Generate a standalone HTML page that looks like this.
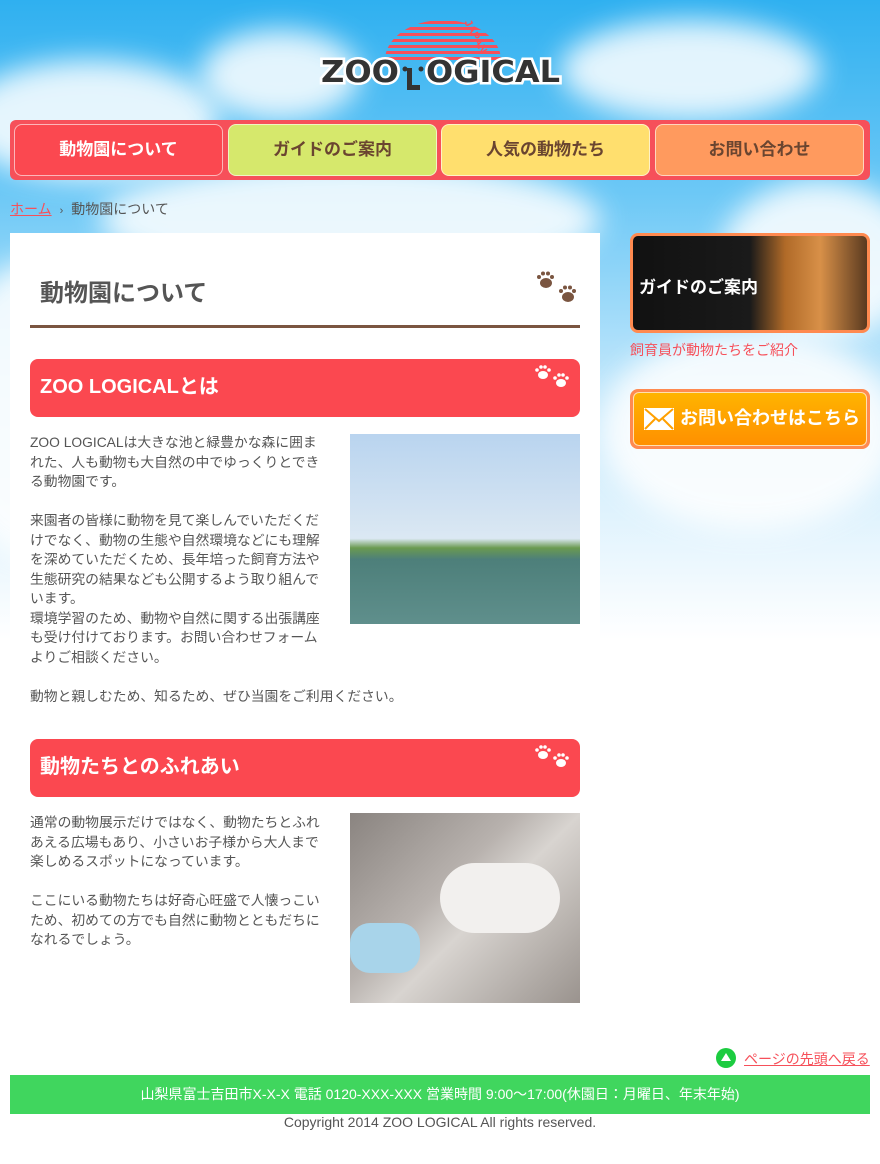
<!DOCTYPE html>
<html><head><meta charset="utf-8">
<style>
*{margin:0;padding:0;box-sizing:border-box}
body{width:880px;height:1164px;overflow:hidden;position:relative;background:#fff;font-family:"Liberation Sans","Noto Sans CJK JP",sans-serif;color:#555}
.sky{position:absolute;left:0;top:0;width:880px;height:640px;background:linear-gradient(#2fb0f0 0%,#6cc8f6 30%,#bfe6fb 60%,#fff 100%)}
.cl{position:absolute;background:#fff;border-radius:50%;filter:blur(14px);opacity:.85}
.abs{position:absolute}
.nav{left:10px;top:120px;width:860px;height:60px;background:#f6505a;border-radius:6px}
.nb{position:absolute;top:4px;height:52px;width:209px;border-radius:8px;border:1px solid rgba(255,255,255,.6);font-weight:bold;font-size:17px;text-align:center;line-height:50px;color:#6a4530}
.main{left:10px;top:233px;width:590px;height:800px;background:#fff}
.h2{position:absolute;left:20px;width:550px;height:58px;background:#fb4850;border-radius:8px;color:#fff;font-weight:bold;font-size:20px;line-height:56px;padding-left:10px}
.txt{position:absolute;left:20px;font-size:13.8px;line-height:19.5px;white-space:nowrap;color:#555}
</style></head><body>
<div class="sky">
<div class="cl" style="left:-40px;top:60px;width:260px;height:120px"></div>
<div class="cl" style="left:200px;top:30px;width:160px;height:90px"></div>
<div class="cl" style="left:560px;top:20px;width:260px;height:100px"></div>
<div class="cl" style="left:720px;top:180px;width:200px;height:160px"></div>
<div class="cl" style="left:100px;top:160px;width:500px;height:120px"></div>
<div class="cl" style="left:600px;top:330px;width:300px;height:200px"></div>
<div class="cl" style="left:-60px;top:260px;width:200px;height:300px"></div>
</div>
<!-- logo -->
<svg class="abs" style="left:318px;top:16px" width="250" height="80" viewBox="0 0 250 80">
<defs><clipPath id="c"><ellipse cx="125" cy="44" rx="58" ry="40"/></clipPath></defs>
<g clip-path="url(#c)" fill="#f6505a">
<rect x="60" y="5" width="130" height="3"/><rect x="60" y="11" width="130" height="3"/><rect x="60" y="17" width="130" height="3"/><rect x="60" y="23" width="130" height="3"/><rect x="60" y="29" width="130" height="3"/><rect x="60" y="35" width="130" height="3"/><rect x="60" y="41" width="130" height="3"/></g>
<text x="0" y="0" transform="translate(146,6) rotate(62)" font-size="11" font-weight="bold" fill="#f6505a" font-family="Liberation Sans">JAPAN</text>
<text x="3" y="66" font-size="30" font-weight="bold" fill="#333" stroke="#fff" stroke-width="5" paint-order="stroke" textLength="78" lengthAdjust="spacingAndGlyphs" font-family="DejaVu Sans">ZOO</text>
<text x="108" y="66" font-size="30" font-weight="bold" fill="#333" stroke="#fff" stroke-width="5" paint-order="stroke" textLength="134" lengthAdjust="spacingAndGlyphs" font-family="DejaVu Sans">OGICAL</text>
<rect x="89" y="52" width="5" height="22" fill="#333"/><rect x="89" y="69" width="13" height="5" fill="#333"/><circle cx="87" cy="53" r="2.5" fill="#333"/><circle cx="103" cy="53" r="2.5" fill="#333"/>
</svg>
<div class="abs nav">
<div class="nb" style="left:4px;background:#fb4850;color:#fff">動物園について</div>
<div class="nb" style="left:218px;background:#d6e86c">ガイドのご案内</div>
<div class="nb" style="left:431px;background:#ffdf6e">人気の動物たち</div>
<div class="nb" style="left:645px;background:#ff9a5e">お問い合わせ</div>
</div>
<div class="abs" style="left:10px;top:199px;font-size:14px"><span style="color:#f6505a;text-decoration:underline">ホーム</span><span style="margin:0 8px;font-size:11px">›</span>動物園について</div>
<div class="abs main">
<div class="abs" style="left:30px;top:40px;font-size:24px;font-weight:bold;color:#555">動物園について</div>
<svg class="abs" style="left:524px;top:38px" width="48" height="34" fill="#7a5540"><g><ellipse cx="12" cy="12" rx="6" ry="5"/><circle cx="5" cy="6" r="2"/><circle cx="9" cy="2.5" r="2"/><circle cx="14" cy="2.5" r="2"/><circle cx="18" cy="6" r="2"/></g><g transform="translate(22,14)"><ellipse cx="12" cy="12" rx="6" ry="5"/><circle cx="5" cy="6" r="2"/><circle cx="9" cy="2.5" r="2"/><circle cx="14" cy="2.5" r="2"/><circle cx="18" cy="6" r="2"/></g></svg>
<div class="abs" style="left:20px;top:92px;width:550px;height:3px;background:#7a5540"></div>
<div class="h2" style="top:126px">ZOO LOGICALとは</div>
<svg class="abs" style="left:524px;top:132px" width="40" height="26" fill="#fff"><g><ellipse cx="9" cy="10" rx="5" ry="4"/><circle cx="3" cy="5" r="1.8"/><circle cx="7" cy="2" r="1.8"/><circle cx="11" cy="2" r="1.8"/><circle cx="15" cy="5" r="1.8"/></g><g transform="translate(18,8)"><ellipse cx="9" cy="10" rx="5" ry="4"/><circle cx="3" cy="5" r="1.8"/><circle cx="7" cy="2" r="1.8"/><circle cx="11" cy="2" r="1.8"/><circle cx="15" cy="5" r="1.8"/></g></svg>
<div class="txt" style="top:200px">ZOO LOGICALは大きな池と緑豊かな森に囲ま<br>れた、人も動物も大自然の中でゆっくりとでき<br>る動物園です。<br><br>来園者の皆様に動物を見て楽しんでいただくだ<br>けでなく、動物の生態や自然環境などにも理解<br>を深めていただくため、長年培った飼育方法や<br>生態研究の結果なども公開するよう取り組んで<br>います。<br>環境学習のため、動物や自然に関する出張講座<br>も受け付けております。お問い合わせフォーム<br>よりご相談ください。<br><br>動物と親しむため、知るため、ぜひ当園をご利用ください。</div>
<div class="abs" style="left:340px;top:201px;width:230px;height:190px;background:linear-gradient(#b9d4ef 0%,#dbe8f3 55%,#6a9a50 60%,#4d7f7a 66%,#5f8f8c 100%)"></div>
<div class="h2" style="top:506px">動物たちとのふれあい</div>
<svg class="abs" style="left:524px;top:512px" width="40" height="26" fill="#fff"><g><ellipse cx="9" cy="10" rx="5" ry="4"/><circle cx="3" cy="5" r="1.8"/><circle cx="7" cy="2" r="1.8"/><circle cx="11" cy="2" r="1.8"/><circle cx="15" cy="5" r="1.8"/></g><g transform="translate(18,8)"><ellipse cx="9" cy="10" rx="5" ry="4"/><circle cx="3" cy="5" r="1.8"/><circle cx="7" cy="2" r="1.8"/><circle cx="11" cy="2" r="1.8"/><circle cx="15" cy="5" r="1.8"/></g></svg>
<div class="txt" style="top:580px">通常の動物展示だけではなく、動物たちとふれ<br>あえる広場もあり、小さいお子様から大人まで<br>楽しめるスポットになっています。<br><br>ここにいる動物たちは好奇心旺盛で人懐っこい<br>ため、初めての方でも自然に動物とともだちに<br>なれるでしょう。</div>
<div class="abs" style="left:340px;top:580px;width:230px;height:190px;background:linear-gradient(135deg,#8a8480 0%,#b8b2ae 40%,#d8d4d0 55%,#9a938e 100%)">
<div class="abs" style="left:90px;top:50px;width:120px;height:70px;background:#f2f0ee;border-radius:40px"></div>
<div class="abs" style="left:0;top:110px;width:70px;height:50px;background:#a8d4ea;border-radius:20px"></div></div>
</div>
<div class="abs" style="left:630px;top:233px;width:240px;height:100px;border:3px solid #ff8a50;border-radius:8px;background:linear-gradient(90deg,#111 0%,#1a1a1a 50%,#b06a28 65%,#d89048 80%,#5a3a20 100%);color:#fff;font-weight:bold;font-size:17px;padding:37px 0 0 6px">ガイドのご案内</div>
<div class="abs" style="left:630px;top:340px;font-size:14px;color:#f6505a">飼育員が動物たちをご紹介</div>
<div class="abs" style="left:630px;top:389px;width:240px;height:60px;border-radius:8px;background:#ff8a50;padding:3px">
<div style="height:54px;border-radius:6px;border:1px solid #ffe0b0;background:linear-gradient(#ffb400,#ff9000);color:#fff;font-weight:bold;font-size:18px;line-height:50px;padding-left:46px;position:relative">お問い合わせはこちら
<svg style="position:absolute;left:10px;top:15px" width="30" height="22"><rect width="30" height="22" fill="#fff"/><path d="M1 1 L15 13 L29 1 M1 21 L11 11 M29 21 L19 11" stroke="#ffa000" stroke-width="2" fill="none"/></svg></div></div>
<div class="abs" style="left:716px;top:1048px;font-size:14px;color:#f6505a"><span style="display:inline-block;width:20px;height:20px;border-radius:50%;background:#1ccc40;vertical-align:-4px;margin-right:8px;position:relative"><span style="position:absolute;left:5px;top:5px;border-left:5px solid transparent;border-right:5px solid transparent;border-bottom:8px solid #fff"></span></span><span style="text-decoration:underline">ページの先頭へ戻る</span></div>
<div class="abs" style="left:10px;top:1075px;width:860px;height:39px;background:#40d65e;color:#fff;font-size:14px;text-align:center;line-height:38px">山梨県富士吉田市X-X-X 電話 0120-XXX-XXX 営業時間 9:00～17:00(休園日：月曜日、年末年始)</div>
<div class="abs" style="left:0;top:1114px;width:880px;text-align:center;font-size:14px;color:#555">Copyright 2014 ZOO LOGICAL All rights reserved.</div>
</body></html>
